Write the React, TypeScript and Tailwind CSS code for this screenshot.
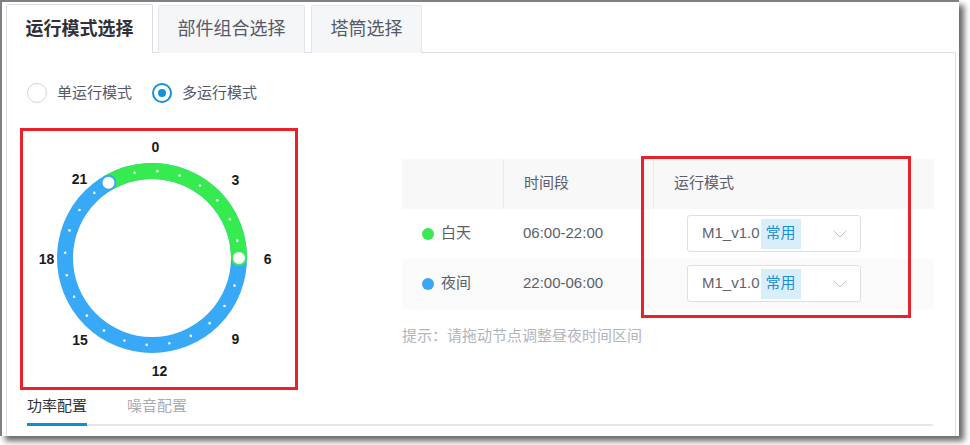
import React from 'react';

const FONT = "font-['Liberation_Sans','Noto_Sans_CJK_SC',sans-serif]";

const periods = [
  { name: '白天', dot: 'bg-[#37ea52]', range: '06:00-22:00', bg: 'bg-white' },
  { name: '夜间', dot: 'bg-[#38a8f6]', range: '22:00-06:00', bg: 'bg-[#fafafa]' },
];

const hourLabels = [
  { t: '0', x: 155.5, y: 145 },
  { t: '3', x: 235.5, y: 177.5 },
  { t: '6', x: 267.7, y: 257 },
  { t: '9', x: 235.5, y: 337 },
  { t: '12', x: 159.5, y: 369 },
  { t: '15', x: 80, y: 337.5 },
  { t: '18', x: 46.5, y: 257 },
  { t: '21', x: 79.5, y: 177 },
];

function ClockRing() {
  const cx = 152;
  const cy = 256;
  const r = 87;
  const pt = (deg: number) => {
    const a = (deg * Math.PI) / 180;
    return [cx + r * Math.sin(a), cy - r * Math.cos(a)];
  };
  const [sx, sy] = pt(330);
  const [ex, ey] = pt(90);
  const dots = Array.from({ length: 24 }, (_, i) => pt(3.5 + i * 15));

  // viewBox uses page coordinates of the box interior
  return (
    <svg width="272" height="256" viewBox="23 129 272 256" className="block">
      <circle cx={cx} cy={cy} r={r} fill="none" stroke="#38a9f7" strokeWidth="16" />
      <path d={`M ${sx} ${sy} A ${r} ${r} 0 0 1 ${ex} ${ey}`} fill="none" stroke="#36eb50" strokeWidth="16" />
      {dots.map(([x, y], i) => (
        <circle key={i} cx={x} cy={y} r="1.3" fill="#ffffff" />
      ))}
      <circle cx={sx} cy={sy} r="7" fill="#ffffff" stroke="#38a9f7" strokeWidth="2" />
      <circle cx={ex} cy={ey} r="7" fill="#ffffff" stroke="#36eb50" strokeWidth="2" />
      {hourLabels.map((l) => (
        <text
          key={l.t}
          x={l.x}
          y={l.y}
          textAnchor="middle"
          dominantBaseline="central"
          fontFamily="'Liberation Sans', sans-serif"
          fontWeight="700"
          fontSize="14"
          fill="#1a1a1a"
        >
          {l.t}
        </text>
      ))}
    </svg>
  );
}

function ModeSelect() {
  return (
    <div className="ml-[34px] w-[174px] h-[37px] flex items-center bg-white border border-[#dcdfe6] rounded-[3px] pl-[14px] pr-[12px]">
      <span className="text-[15px] text-[#5f6270]">M1_v1.0</span>
      <span className="ml-[1px] h-[30px] px-[5px] flex items-center bg-[#d9eefb] text-[15px] text-[#1a8fd8]">常用</span>
      <svg width="14" height="8" viewBox="0 0 14 8" className="ml-auto mr-[1px]">
        <polyline points="0.5,0.5 7,7 13.5,0.5" fill="none" stroke="#c0c4cc" strokeWidth="1" />
      </svg>
    </div>
  );
}

export default function App() {
  return (
    <div className={`w-[970px] h-[445px] bg-white overflow-hidden ${FONT}`}>
      <div className="w-[959px] h-[436px] bg-white border-l-2 border-t-2 border-[#808080] shadow-[5px_5px_6px_rgba(0,0,0,0.6)] overflow-hidden">
        <div className="ml-[4px] w-[950px]">
          {/* top tabs */}
          <div className="mt-[3px] flex items-end gap-[5px] border-b border-[#dcdde8] h-[48px]">
            <div className="w-[147px] h-[49px] -mb-px flex items-center justify-center bg-white border border-b-0 border-[#dcdde8] rounded-t-[2px] text-[18px] font-bold text-[#2f3138]">
              运行模式选择
            </div>
            <div className="w-[147px] h-[48px] -mb-px flex items-center justify-center bg-[#f5f6f8] border border-b-0 border-[#e4e5ec] rounded-t-[2px] text-[18px] text-[#555a68]">
              部件组合选择
            </div>
            <div className="ml-[1px] w-[111px] h-[48px] -mb-px flex items-center justify-center bg-[#f5f6f8] border border-b-0 border-[#e4e5ec] rounded-t-[2px] text-[18px] text-[#555a68]">
              塔筒选择
            </div>
          </div>

          {/* panel */}
          <div className="border-x border-[#dcdde8] h-[400px]">
            {/* radio row */}
            <div className="pt-[29px] pl-[20px] flex items-center text-[15px] text-[#55596a]">
              <span className="w-[20px] h-[20px] rounded-full border border-[#d3d5dd] bg-white" />
              <span className="ml-[10px]">单运行模式</span>
              <span className="ml-[20px] w-[20px] h-[20px] rounded-full border-2 border-[#1690d8] flex items-center justify-center">
                <span className="w-[8px] h-[8px] rounded-full bg-[#1690d8]" />
              </span>
              <span className="ml-[10px]">多运行模式</span>
            </div>

            {/* clock + table */}
            <div className="mt-[23px] flex items-start">
              <div className="ml-[13px] w-[278px] h-[262px] border-[3px] border-[#e8212b]">
                <ClockRing />
              </div>

              <div className="ml-[104px] mt-[31px] relative">
                <div className="w-[532px] text-[15px] text-[#5a5e6b]">
                  <div className="flex h-[50px] bg-[#f8f8f9] items-center">
                    <div className="w-[101px] h-full" />
                    <div className="w-[150px] h-full flex items-center pl-[20px] border-l border-[#e9e9ee]">时间段</div>
                    <div className="flex-1 h-full flex items-center pl-[20px] border-l border-[#e9e9ee]">运行模式</div>
                  </div>
                  {periods.map((p) => (
                    <div key={p.name} className={`flex h-[50px] items-center ${p.bg}`}>
                      <div className="w-[101px] pl-[20px] flex items-center gap-[7px]">
                        <span className={`w-[12px] h-[12px] rounded-full ${p.dot}`} />
                        <span>{p.name}</span>
                      </div>
                      <div className="w-[150px] pl-[20px]">{p.range}</div>
                      <div className="flex-1">
                        <ModeSelect />
                      </div>
                    </div>
                  ))}
                </div>
                <div className="mt-[16px] text-[15px] text-[#b3b5bb]">提示：请拖动节点调整昼夜时间区间</div>

                {/* annotation box */}
                <div className="absolute left-[239px] top-[-3px] w-[270px] h-[162px] border-[3px] border-[#e8212b]" />
              </div>
            </div>

            {/* bottom tabs */}
            <div className="mt-[5px] ml-[20px] mr-[22px] flex gap-[40px] border-b-2 border-[#e6e7ec] text-[15px]">
              <div className="relative pb-[7px] text-[#2f3138]">
                功率配置
                <span className="absolute left-0 right-0 -bottom-[2px] h-[3px] bg-[#0b8fd6]" />
              </div>
              <div className="pb-[7px] text-[#a9acb5]">噪音配置</div>
            </div>
          </div>
        </div>
      </div>
    </div>
  );
}
